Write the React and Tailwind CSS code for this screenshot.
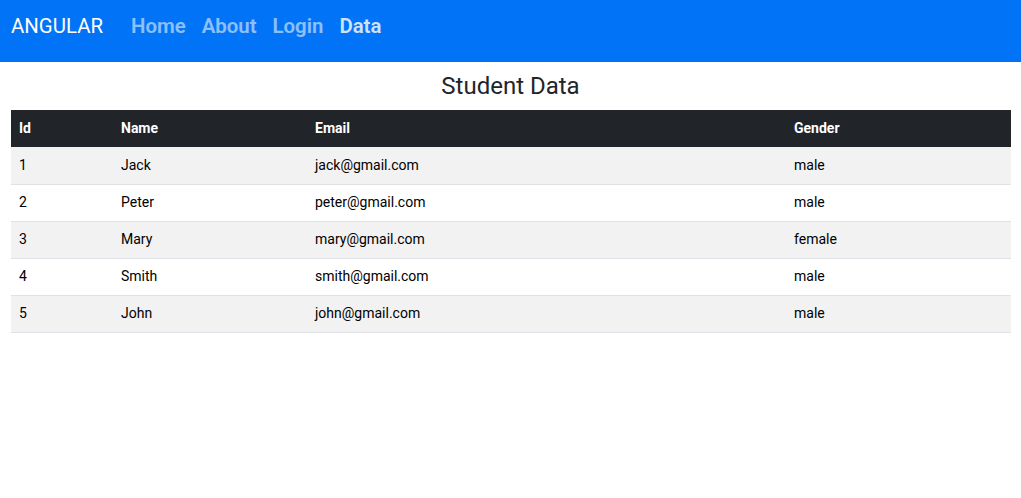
import React from 'react';

const students = [
  { id: 1, name: 'Jack', email: 'jack@gmail.com', gender: 'male' },
  { id: 2, name: 'Peter', email: 'peter@gmail.com', gender: 'male' },
  { id: 3, name: 'Mary', email: 'mary@gmail.com', gender: 'female' },
  { id: 4, name: 'Smith', email: 'smith@gmail.com', gender: 'male' },
  { id: 5, name: 'John', email: 'john@gmail.com', gender: 'male' },
];

export default function App() {
  return (
    <div className="min-h-[498px] bg-white font-['Roboto',sans-serif] text-[#212529]">
      {/* Navbar */}
      <nav className="h-[62px] bg-[#0073f6] flex items-start pt-[14px] px-[11px]">
        <span className="text-white text-[20.4px] leading-[24px] mr-[28px]">ANGULAR</span>
        <div className="flex gap-[16px] text-[20.4px] leading-[24px] font-semibold">
          <a className="text-white/55">Home</a>
          <a className="text-white/55">About</a>
          <a className="text-white/55">Login</a>
          <a className="text-white/80">Data</a>
        </div>
      </nav>

      {/* Content */}
      <div className="px-[11px]">
        <h2 className="text-center text-[24px] leading-[28px] pt-[10px] pb-[10px]">Student Data</h2>
        <table className="w-[1000px] border-collapse text-left text-[14px]">
          <thead className="bg-[#212529] text-white">
            <tr className="h-[37px]">
              <th className="w-[102px] px-[8px] font-bold">Id</th>
              <th className="w-[194px] px-[8px] font-bold">Name</th>
              <th className="w-[479px] px-[8px] font-bold">Email</th>
              <th className="px-[8px] font-bold">Gender</th>
            </tr>
          </thead>
          <tbody className="text-black">
            {students.map((s, i) => (
              <tr
                key={s.id}
                className={`h-[37px] border-b border-[#dee2e6] ${i % 2 === 0 ? 'bg-[#f2f2f2]' : 'bg-white'}`}
              >
                <td className="px-[8px]">{s.id}</td>
                <td className="px-[8px]">{s.name}</td>
                <td className="px-[8px]">{s.email}</td>
                <td className="px-[8px]">{s.gender}</td>
              </tr>
            ))}
          </tbody>
        </table>
      </div>
    </div>
  );
}
